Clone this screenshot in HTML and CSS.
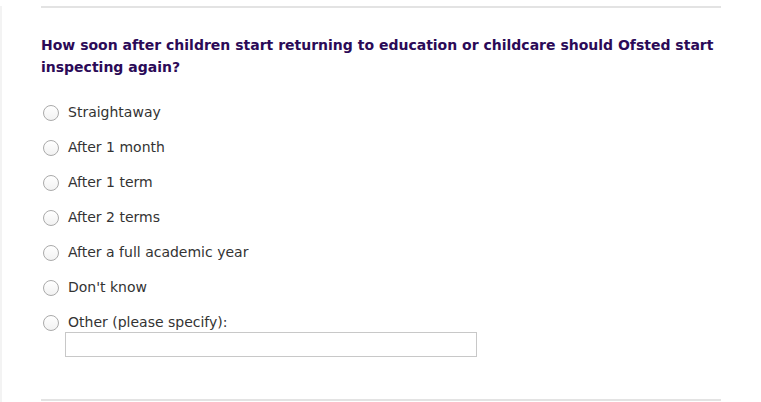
FILE: index.html
```html
<!DOCTYPE html>
<html>
<head>
<meta charset="utf-8">
<link rel="stylesheet" href="styles.css">
</head>
<body>
<div class="page">
  <div class="question">
    <h2 class="q-title">How soon after children start returning to education or childcare should Ofsted start inspecting again?</h2>
    <div class="options">
      <label class="opt"><span class="radio"></span><span class="lbl">Straightaway</span></label>
      <label class="opt"><span class="radio"></span><span class="lbl">After 1 month</span></label>
      <label class="opt"><span class="radio"></span><span class="lbl">After 1 term</span></label>
      <label class="opt"><span class="radio"></span><span class="lbl">After 2 terms</span></label>
      <label class="opt"><span class="radio"></span><span class="lbl">After a full academic year</span></label>
      <label class="opt"><span class="radio"></span><span class="lbl">Don't know</span></label>
      <div class="opt other">
        <span class="radio"></span>
        <div class="other-col">
          <span class="lbl">Other (please specify):</span>
          <div class="textbox"></div>
        </div>
      </div>
    </div>
  </div>
</div>
</body>
</html>
```
FILE: styles.css
```css
html, body {
  margin: 0;
  padding: 0;
  background: #fff;
}
body {
  font-family: "DejaVu Sans", Verdana, sans-serif;
  width: 761px;
  height: 402px;
  overflow: hidden;
}
.page {
  border-left: 2px solid #f3f3f3;
  height: 402px;
  box-sizing: border-box;
  padding-left: 39px;
}
.question {
  width: 680px;
  border-top: 2px solid #e3e3e3;
  border-bottom: 2px solid #e3e3e3;
  margin-top: 6px;
  padding-top: 26px;
  height: 395px;
  box-sizing: border-box;
}
.q-title {
  margin: 0;
  font-size: 14px;
  line-height: 22px;
  font-weight: bold;
  color: #2b0a57;
}
.options {
  margin-top: 23px;
  display: flex;
  flex-direction: column;
  gap: 13px;
}
.opt {
  display: flex;
  align-items: flex-start;
  gap: 9px;
  padding-left: 2px;
  font-size: 14px;
  line-height: 22px;
  color: #333;
}
.radio {
  width: 14px;
  height: 14px;
  border: 1px solid #aaa;
  border-radius: 50%;
  background: linear-gradient(#fff, #f2f2f2);
  margin-top: 4px;
  flex: none;
}
.other-col {
  display: flex;
  flex-direction: column;
}
.textbox {
  margin-left: -3px;
  margin-top: -1px;
  width: 410px;
  height: 23px;
  border: 1px solid #c8c8c8;
  background: #fff;
}
```
